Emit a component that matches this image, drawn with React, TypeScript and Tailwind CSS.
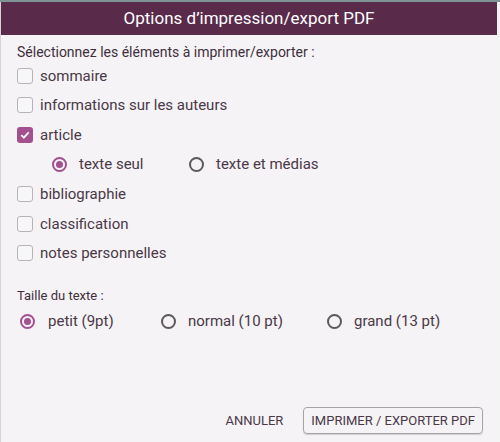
export default function App() {
  const items = [
    { label: 'sommaire', checked: false },
    { label: 'informations sur les auteurs', checked: false },
    { label: 'article', checked: true },
  ];
  const items2 = ['bibliographie', 'classification', 'notes personnelles'];

  const Checkbox = ({ checked }: { checked: boolean }) =>
    checked ? (
      <span className="flex h-[16px] w-[16px] items-center justify-center rounded-[3px] bg-[#a2508f]">
        <svg width="12" height="12" viewBox="0 0 12 12">
          <path d="M2.3 6.2 L4.8 8.6 L9.7 3.4" fill="none" stroke="#fff" strokeWidth="1.8" />
        </svg>
      </span>
    ) : (
      <span className="block h-[16px] w-[16px] rounded-[3px] border border-[#b9b3b8] bg-[#f7f6f8]" />
    );

  const Radio = ({ on }: { on: boolean }) =>
    on ? (
      <span className="flex h-[15px] w-[15px] items-center justify-center rounded-full border-2 border-[#a2508f]">
        <span className="block h-[7px] w-[7px] rounded-full bg-[#a2508f]" />
      </span>
    ) : (
      <span className="block h-[15px] w-[15px] rounded-full border-2 border-[#5d585c]" />
    );

  const Row = ({ label, checked }: { label: string; checked: boolean }) => (
    <div className="flex h-[29.6px] items-center gap-[7px] pl-[16px]">
      <Checkbox checked={checked} />
      <span className="text-[15px] text-[#4a3846]">{label}</span>
    </div>
  );

  return (
    <div className="flex h-[442px] w-[500px] flex-col overflow-hidden bg-[#f7f7f7]" style={{ fontFamily: 'Roboto, sans-serif' }}>
      <div className="h-[2px] bg-[#7d9595]" />
      <div className="flex flex-1">
        <div className="flex w-[497px] flex-col border-l border-[#d6d3d6] bg-[#f5f3f6]">
          <div className="flex h-[33px] items-center justify-center bg-[#5a2a4b]">
            <span className="text-[17px] text-white">Options d’impression/export PDF</span>
          </div>
          <div className="pl-[16px] pt-[7px] text-[14px] text-[#3f2f3c]">
            Sélectionnez les éléments à imprimer/exporter :
          </div>
          <div className="mt-[-2px] flex flex-col">
            {items.map((it) => (
              <Row key={it.label} label={it.label} checked={it.checked} />
            ))}
            <div className="flex h-[29.6px] items-center pl-[51px] text-[15px] text-[#4a3846]">
              <Radio on />
              <span className="ml-[12px] w-[110px]">texte seul</span>
              <Radio on={false} />
              <span className="ml-[12px]">texte et médias</span>
            </div>
            {items2.map((l) => (
              <Row key={l} label={l} checked={false} />
            ))}
          </div>
          <div className="pl-[16px] pt-[18px] text-[13px] text-[#3f2f3c]">Taille du texte :</div>
          <div className="flex h-[31px] items-center pl-[19px] text-[15px] text-[#4a3846]">
            <Radio on />
            <span className="ml-[13px] w-[113px]">petit (9pt)</span>
            <Radio on={false} />
            <span className="ml-[12px] w-[139px]">normal (10 pt)</span>
            <Radio on={false} />
            <span className="ml-[12px]">grand (13 pt)</span>
          </div>
          <div className="mt-auto flex items-center justify-end gap-[20px] pb-[8px] pr-[14px]">
            <span className="text-[13px] text-[#4a3846]">ANNULER</span>
            <span className="flex h-[27px] items-center rounded-[4px] border border-[#a8a2a7] px-[7px] text-[13px] text-[#4a3846] shadow-[0_1px_1px_rgba(0,0,0,0.15)]">
              IMPRIMER / EXPORTER PDF
            </span>
          </div>
        </div>
        <div className="flex-1 bg-[#f3f3f3]" />
      </div>
    </div>
  );
}
